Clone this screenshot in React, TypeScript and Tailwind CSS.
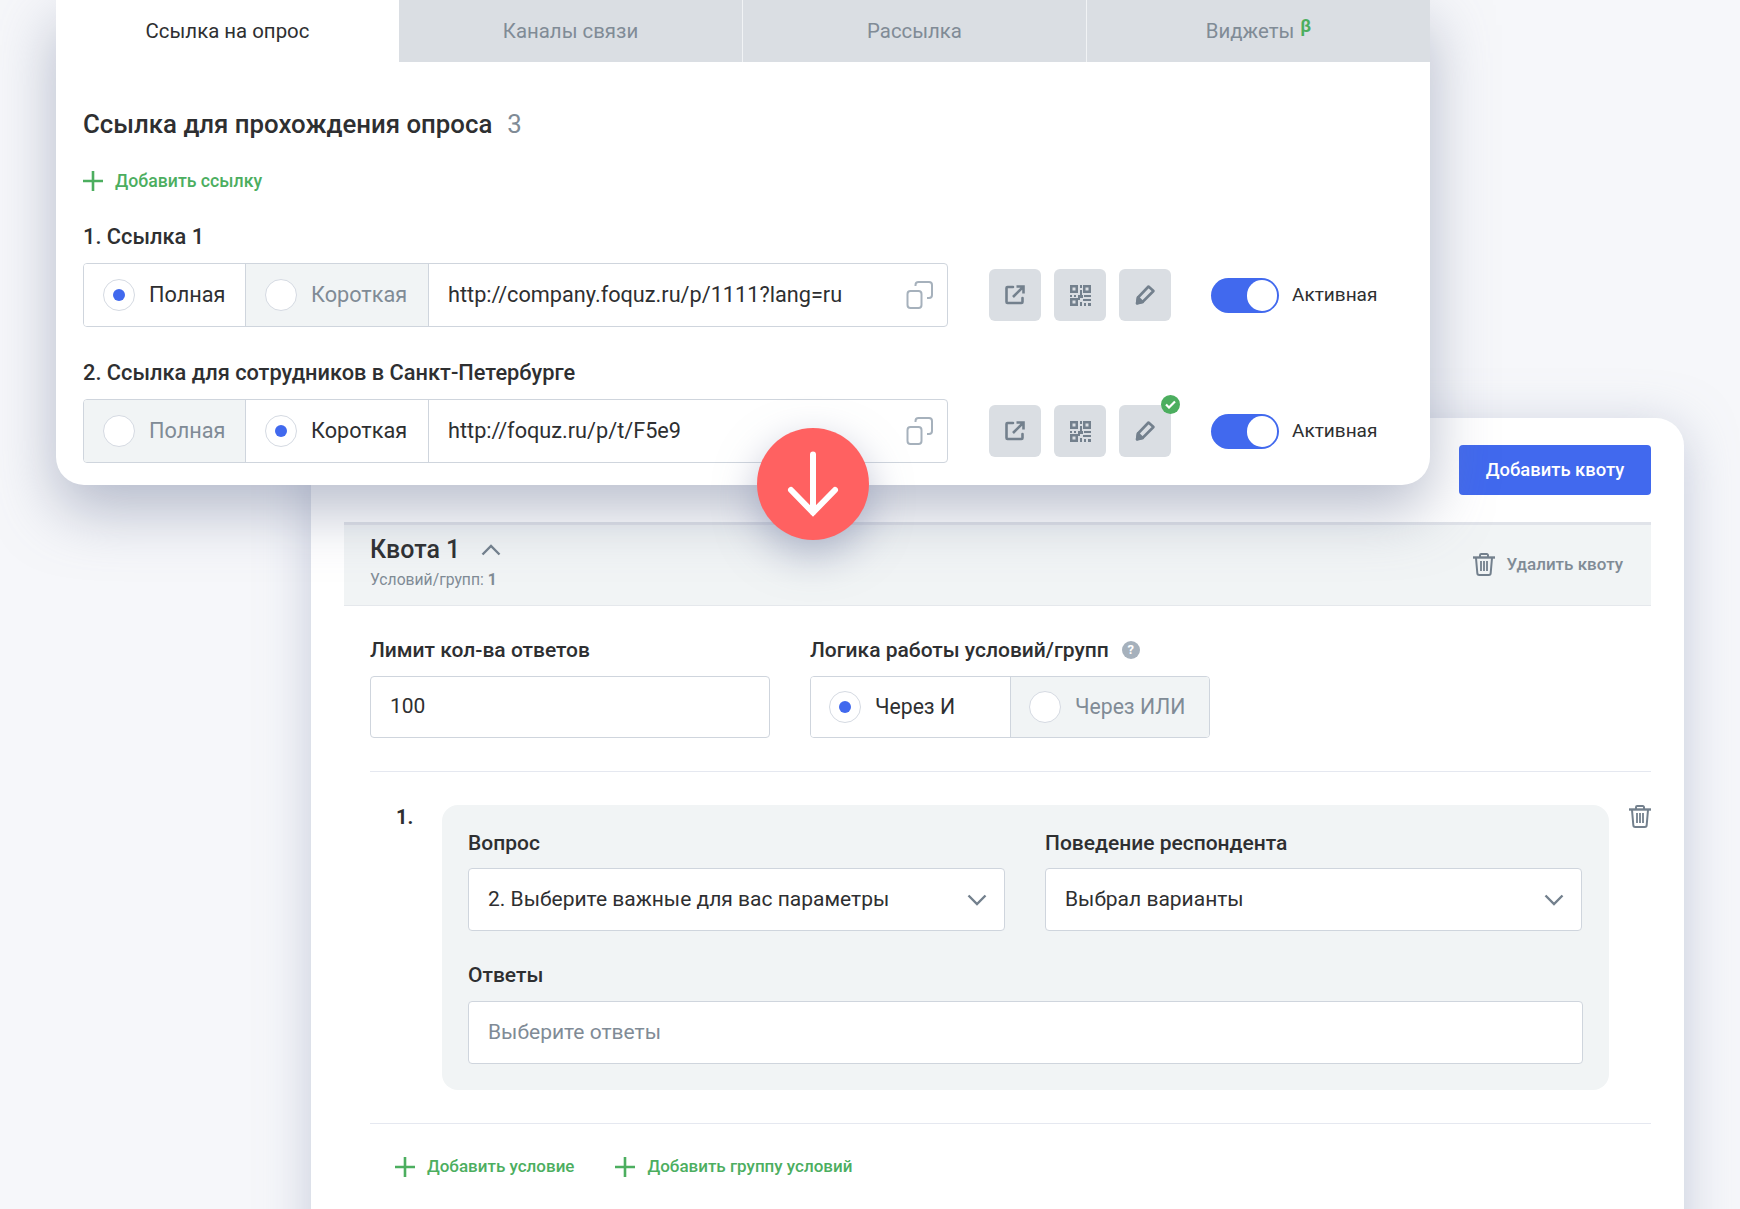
import React from "react";

const ExternalIcon = () => (
  <svg width="22" height="22" viewBox="0 0 22 22" fill="none" stroke="#73808d" strokeWidth="2.6">
    <path d="M9 3H3.500a1 1 0 0 0-1 1v14a1 1 0 0 0 1 1h14a1 1 0 0 0 1-1v-4" strokeLinecap="round" />
    <path d="M9 13 19 3M12.500 2.500H19.500V9.500" />
  </svg>
);

const QrIcon = () => (
  <svg width="21" height="21" viewBox="0 0 21 21" fill="#73808d">
    <path fillRule="evenodd" d="M0 0h8v8H0zM2.500 2.500v3h3v-3zM13 0h8v8h-8zM15.500 2.500v3h3v-3zM0 13h8v8H0zM2.500 15.500v3h3v-3z" />
    <path d="M10 0h2v3h-2zM10 5h2v5h-2zM0 10h2v2H0zM4 10h2v2H4zM8 10h5v3h-3v2H8zM14 10h7v2h-7zM13 14h8v2h-8zM10 17h2v4h-2zM14 18h2v3h-2zM18 18h3v3h-3z" />
  </svg>
);

const PencilIcon = () => (
  <svg width="22" height="22" viewBox="0 0 22 22" fill="none" stroke="#73808d" strokeWidth="2.6" strokeLinejoin="round">
    <path d="M14.500 2.500 19.500 7 8.500 18 3 19.500 4 13.500z" />
    <path d="M3.200 19 4 13.500 8.500 18z" fill="#73808d" />
  </svg>
);

const CopyIcon = () => (
  <svg width="27" height="28" viewBox="0 0 27 28" fill="none" stroke="#a6b1bc" strokeWidth="2">
    <rect x="1.500" y="10" width="14" height="17" rx="3" />
    <path d="M9.500 5V4a3 3 0 0 1 3-3H23a3 3 0 0 1 3 3v10a3 3 0 0 1-3 3h-2" />
  </svg>
);

const TrashIcon = () => (
  <svg width="22" height="23" viewBox="0 0 22 23" fill="none" stroke="#73808d" strokeWidth="2">
    <path d="M0 4.500h22" strokeWidth="2.400" />
    <path d="M7 4V2.200A1.200 1.200 0 0 1 8.200 1h5.600A1.200 1.200 0 0 1 15 2.200V4" />
    <path d="M3 5l1.300 15a2 2 0 0 0 2 2h9.400a2 2 0 0 0 2-2L19 5" />
    <path d="M8 8v10M11 8v10M14 8v10" strokeWidth="1.800" />
  </svg>
);

const Chevron = ({ up = false }: { up?: boolean }) => (
  <svg width="20" height="12" viewBox="0 0 20 12" fill="none" stroke="#73808d" strokeWidth="2.400" className={up ? "rotate-180" : ""}>
    <path d="M1.500 1.500 10 10l8.500-8.500" />
  </svg>
);

const Plus = () => (
  <svg width="20" height="20" viewBox="0 0 20 20" stroke="#4cae5f" strokeWidth="2.600">
    <path d="M10 0v20M0 10h20" />
  </svg>
);

const Radio = ({ on }: { on: boolean }) => (
  <span className="flex h-8 w-8 shrink-0 items-center justify-center rounded-full border border-[#d5dae2] bg-white">
    {on && <span className="h-3 w-3 rounded-full bg-[#4169ee]" />}
  </span>
);

const Segment = ({ label, on, width }: { label: string; on: boolean; width: string }) => (
  <div className={`flex h-full shrink-0 items-center gap-[14px] ${width} ${on ? "bg-white text-[#2e2f31]" : "bg-[#f1f4f5] text-[#808b96]"}`}>
    <Radio on={on} />
    <span>{label}</span>
  </div>
);

const LinkRow = ({ full, url, badge }: { full: boolean; url: string; badge?: boolean }) => (
  <div className="flex items-center">
    <div className="flex h-16 w-[865px] shrink-0 items-center overflow-hidden rounded-[4px] border border-[#cfd5dd] bg-white text-[21.7px]">
      <Segment label="Полная" on={full} width="w-[162px] border-r border-[#cfd5dd] pl-[19px]" />
      <Segment label="Короткая" on={!full} width="w-[183px] border-r border-[#cfd5dd] pl-[19px]" />
      <div className="flex flex-1 items-center justify-between pl-[19px] pr-[14px] text-[#2e2f31]">
        <span>{url}</span>
        <CopyIcon />
      </div>
    </div>
    <div className="ml-[41px] flex gap-[13px]">
      <button className="flex h-[52px] w-[52px] items-center justify-center rounded-[6px] bg-[#dadee3]"><ExternalIcon /></button>
      <button className="flex h-[52px] w-[52px] items-center justify-center rounded-[6px] bg-[#dadee3]"><QrIcon /></button>
      <button className="relative flex h-[52px] w-[52px] items-center justify-center rounded-[6px] bg-[#dadee3]">
        <PencilIcon />
        {badge && (
          <span className="absolute -right-[9px] -top-[10px] flex h-[19px] w-[19px] items-center justify-center rounded-full bg-[#4cae5f]">
            <svg width="11" height="9" viewBox="0 0 11 9" fill="none" stroke="#fff" strokeWidth="2.200"><path d="M1 4.500 4 7.500 10 1.500" /></svg>
          </span>
        )}
      </button>
    </div>
    <div className="ml-[40px] flex h-[35px] w-[68px] items-center justify-end rounded-full bg-[#4169ee] pr-[2px]">
      <span className="h-[31px] w-[30px] rounded-full bg-white" />
    </div>
    <span className="ml-[13px] text-[19px] text-[#2e2f31]">Активная</span>
  </div>
);

const Tab = ({ children, active, divider }: { children: React.ReactNode; active?: boolean; divider?: boolean }) => (
  <div className={`flex h-[62px] flex-1 items-center justify-center text-[20.4px] ${active ? "bg-white text-[#2e2f31]" : "bg-[#dadee3] text-[#808b96]"} ${divider ? "border-l border-[#f1f3f5]" : ""}`}>
    {children}
  </div>
);

const Label = ({ children, className = "" }: { children: React.ReactNode; className?: string }) => (
  <div className={`font-medium leading-[24px] text-[#2e2f31] ${className}`}>{children}</div>
);

const Field = ({ children, className = "" }: { children: React.ReactNode; className?: string }) => (
  <div className={`flex items-center justify-between rounded-[4px] border border-[#cfd5dd] bg-white px-[19px] text-[21px] ${className}`}>
    {children}
  </div>
);

export default function App() {
  return (
    <div className="relative h-[1209px] w-[1740px] overflow-hidden bg-[#f6f7fa] font-['Roboto',sans-serif]">
      {/* Quota window */}
      <div className="absolute left-[311px] top-[418px] h-[860px] w-[1373px] rounded-[28px] bg-white pl-[33px] pr-[33px] pt-[27px] shadow-[0_10px_50px_rgba(150,160,190,0.5)]">
        <div className="flex justify-end">
          <button className="h-[50px] w-[192px] rounded-[4px] bg-[#4169ee] text-[18.4px] font-medium text-white">Добавить квоту</button>
        </div>
        <div className="mt-[27px] flex h-[84px] items-center justify-between border-b border-t-[3px] border-b-[#e5e8ec] border-t-[#e0e3e9] bg-[#f1f4f5] pl-[26px] pr-[28px]">
          <div className="-mt-[3px]">
            <div className="-mt-[2px] flex items-center gap-[21px] text-[25px] font-medium leading-[30px] text-[#2e2f31]">
              <span>Квота 1</span>
              <Chevron up />
            </div>
            <div className="mt-[5px] text-[15.7px] leading-[20px] text-[#808b96]">
              Условий/групп: <span className="font-bold">1</span>
            </div>
          </div>
          <div className="-mt-[1px] flex items-center gap-[11px] text-[17px] font-medium text-[#808b96]">
            <TrashIcon />
            <span>Удалить квоту</span>
          </div>
        </div>

        <div className="ml-[26px]">
          <div className="mt-[32px] flex gap-[40px]">
            <div className="w-[400px]">
              <Label className="text-[21px]">Лимит кол-ва ответов</Label>
              <Field className="mt-[14px] h-[62px] text-[#2e2f31]">100</Field>
            </div>
            <div className="w-[400px]">
              <Label className="flex items-center gap-[13px] text-[21px]">
                Логика работы условий/групп
                <span className="flex h-[18px] w-[18px] items-center justify-center rounded-full bg-[#a6b1bc] text-[13px] font-bold text-white">?</span>
              </Label>
              <div className="mt-[14px] flex h-[62px] overflow-hidden rounded-[4px] border border-[#cfd5dd] text-[21.2px]">
                <Segment label="Через И" on width="w-[200px] border-r border-[#cfd5dd] pl-[18px]" />
                <Segment label="Через ИЛИ" on={false} width="flex-1 pl-[18px]" />
              </div>
            </div>
          </div>

          <div className="mt-[33px] h-px bg-[#e5e8f0]" />

          <div className="mt-[33px] flex">
            <div className="w-[72px] pl-[26px] text-[20px] font-bold leading-[24px] text-[#2e2f31]">1.</div>
            <div className="h-[285px] w-[1167px] rounded-[16px] bg-[#f1f4f5] px-[26px] pt-[26px]">
              <div className="flex gap-[40px]">
                <div className="w-[537px]">
                  <Label className="text-[21px]">Вопрос</Label>
                  <Field className="mt-[13px] h-[63px] text-[#2e2f31]">
                    <span>2. Выберите важные для вас параметры</span>
                    <span className="-mr-[2px]"><Chevron /></span>
                  </Field>
                </div>
                <div className="w-[537px]">
                  <Label className="text-[21px]">Поведение респондента</Label>
                  <Field className="mt-[13px] h-[63px] text-[#2e2f31]">
                    <span>Выбрал варианты</span>
                    <span className="-mr-[2px]"><Chevron /></span>
                  </Field>
                </div>
              </div>
              <Label className="mt-[32px] text-[21px]">Ответы</Label>
              <Field className="mt-[14px] h-[63px] text-[#808b96]">Выберите ответы</Field>
            </div>
            <div className="ml-[20px]"><TrashIcon /></div>
          </div>

          <div className="mt-[33px] h-px bg-[#e5e8f0]" />

          <div className="mt-[30px] flex items-center pl-[25px] text-[17px] font-medium text-[#4cae5f]">
            <Plus />
            <span className="ml-[12px]">Добавить условие</span>
            <span className="ml-[41px]"><Plus /></span>
            <span className="ml-[12px]">Добавить группу условий</span>
          </div>
        </div>
      </div>

      {/* Links window */}
      <div className="absolute left-[56px] top-0 h-[485px] w-[1374px] overflow-hidden rounded-b-[28px] bg-white shadow-[0_25px_60px_rgba(115,125,155,0.5)]">
        <div className="flex">
          <Tab active>Ссылка на опрос</Tab>
          <Tab>Каналы связи</Tab>
          <Tab divider>Рассылка</Tab>
          <Tab divider>
            Виджеты
            <span className="relative -top-[5px] ml-[6px] text-[18px] font-bold leading-none text-[#4cae5f]">β</span>
          </Tab>
        </div>
        <div className="pl-[27px]">
          <div className="mt-[46px] flex items-baseline gap-[15px] text-[25.8px] leading-[32px]">
            <span className="font-medium text-[#2e2f31]">Ссылка для прохождения опроса</span>
            <span className="text-[#808b96]">3</span>
          </div>
          <div className="mt-[30px] flex items-center gap-[12px] text-[17.7px] font-medium leading-[22px] text-[#4cae5f]">
            <Plus />
            <span>Добавить ссылку</span>
          </div>
          <Label className="mt-[33px] text-[21.8px]">1. Ссылка 1</Label>
          <div className="mt-[14px]"><LinkRow full url="http://company.foquz.ru/p/1111?lang=ru" /></div>
          <Label className="mt-[34px] text-[21.8px]">2. Ссылка для сотрудников в Санкт-Петербурге</Label>
          <div className="mt-[14px]"><LinkRow full={false} url="http://foquz.ru/p/t/F5e9" badge /></div>
        </div>
      </div>

      {/* Arrow badge */}
      <div className="absolute left-[757px] top-[428px] flex h-[112px] w-[112px] items-center justify-center rounded-full bg-[#ff6161] shadow-[0_15px_40px_rgba(120,130,165,0.5)]">
        <svg width="52" height="66" viewBox="0 0 52 66" fill="none" stroke="#fff" strokeWidth="6" strokeLinecap="round">
          <path d="M26 3.500v58M4 39l22 22.500L48 39" />
        </svg>
      </div>
    </div>
  );
}
